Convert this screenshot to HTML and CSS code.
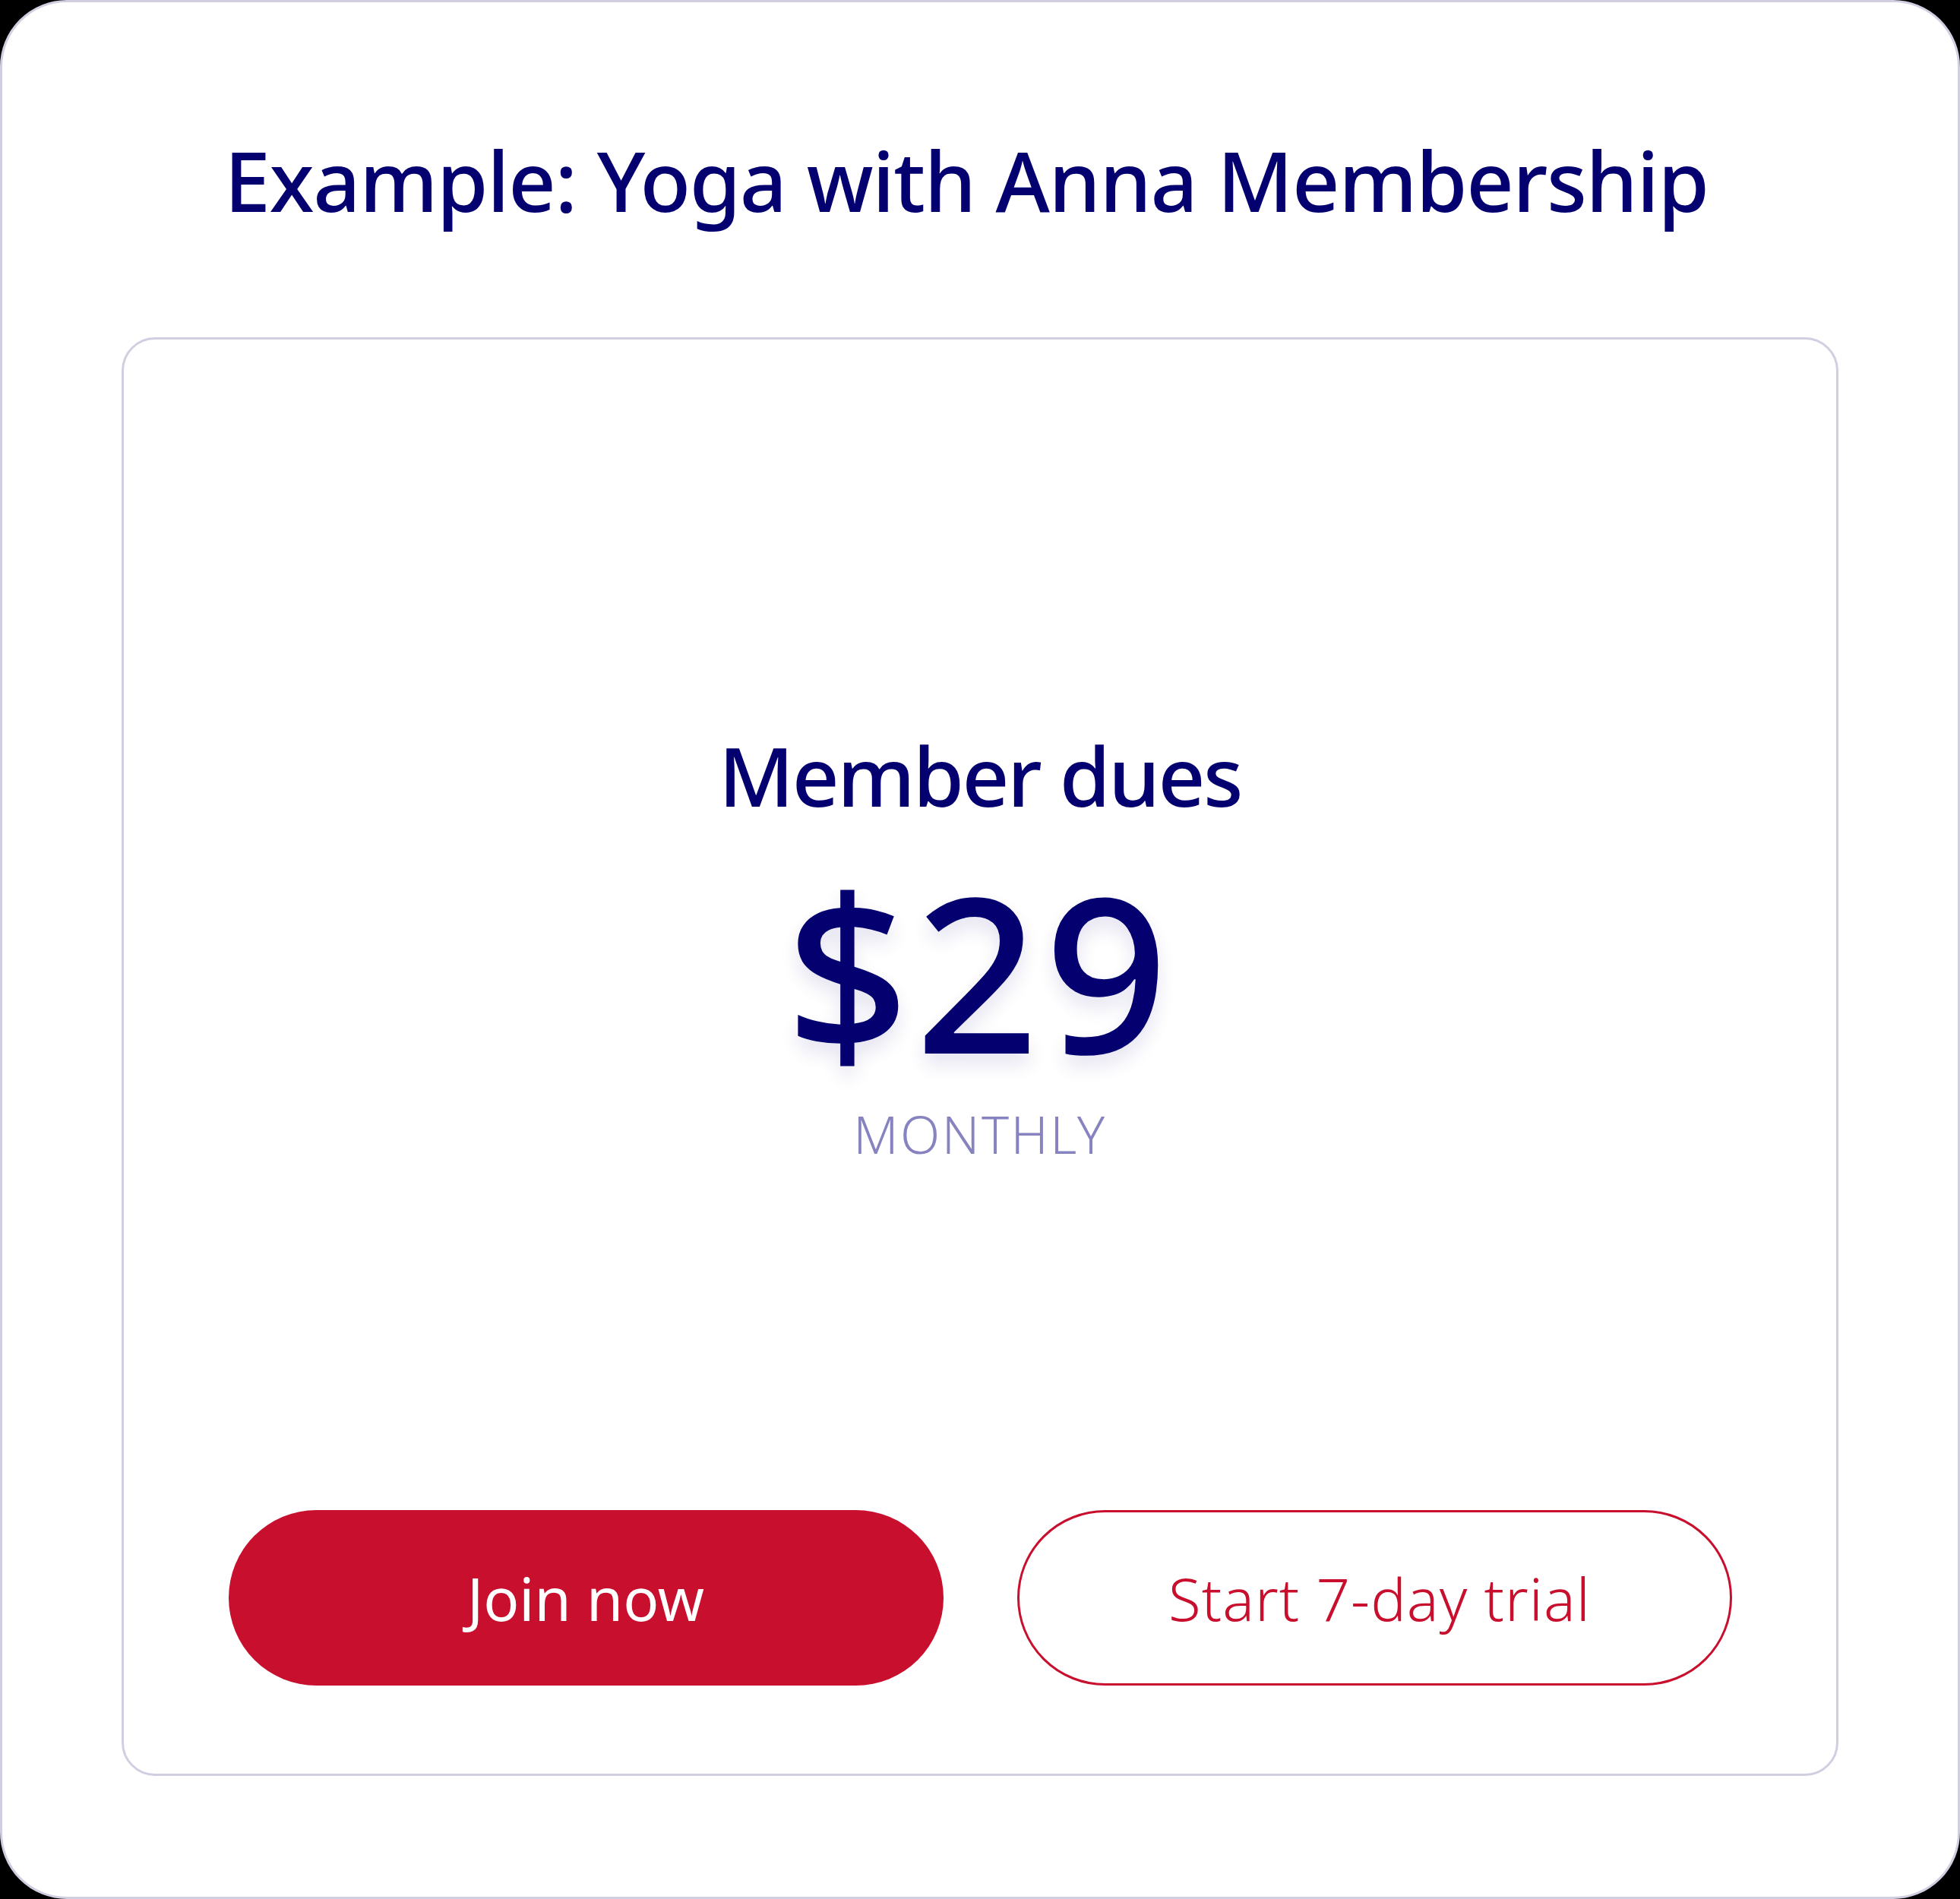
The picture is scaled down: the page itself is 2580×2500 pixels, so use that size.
FILE: index.html
```html
<!DOCTYPE html>
<html lang="en">
<head>
<meta charset="utf-8">
<title>Yoga with Anna Membership</title>
<link rel="stylesheet" href="styles.css">
</head>
<body>
<main class="card">
  <h1 class="title">Example: Yoga with Anna Membership</h1>
  <section class="plan">
    <div class="plan-body">
      <h2 class="plan-name">Member dues</h2>
      <div class="price">$29</div>
      <div class="period">MONTHLY</div>
    </div>
    <div class="actions">
      <a class="btn btn-primary" href="#">Join now</a>
      <a class="btn btn-outline" href="#">Start 7-day trial</a>
    </div>
  </section>
</main>
</body>
</html>
```
FILE: styles.css
```css
html, body {
  margin: 0;
  padding: 0;
  background: #000;
}
body {
  width: 2580px;
  height: 2500px;
  font-family: "Noto Sans", "Open Sans", sans-serif;
  color: #040070;
}
.card {
  box-sizing: border-box;
  width: 2580px;
  height: 2500px;
  background: #fff;
  border: 3px solid #d0cfe2;
  border-radius: 88px;
  padding: 179px 157px 159px;
  display: flex;
  flex-direction: column;
}
.title {
  margin: 0 0 153px;
  padding-right: 36px;
  font-size: 109px;
  line-height: 109px;
  font-weight: 500;
  text-align: center;
  letter-spacing: -1.4px;
}
.plan {
  flex: 1;
  border: 3px solid #d0cfe2;
  border-radius: 44px;
  display: flex;
  flex-direction: column;
  padding: 0 0 116px;
}
.plan-body {
  padding-top: 520px;
  display: flex;
  flex-direction: column;
  align-items: center;
}
.plan-name {
  margin: 0;
  font-size: 108px;
  line-height: 108px;
  font-weight: 500;
  letter-spacing: -2.5px;
}
.price {
  margin-top: 60px;
  font-size: 284px;
  line-height: 284px;
  font-weight: 500;
  letter-spacing: 8px;
  text-shadow: 0 14px 24px rgba(40, 30, 140, 0.12);
}
.period {
  margin-top: 40px;
  font-size: 68px;
  line-height: 68px;
  font-weight: 300;
  letter-spacing: 2.5px;
  color: #8783c0;
}
.actions {
  margin-top: auto;
  display: flex;
  justify-content: center;
  gap: 97px;
}
.btn {
  box-sizing: border-box;
  width: 941px;
  height: 231px;
  border-radius: 116px;
  display: flex;
  align-items: center;
  justify-content: center;
  font-size: 78px;
  text-decoration: none;
  color: #c8102e;
}
.btn-primary {
  background: #c8102e;
  color: #fff;
  font-weight: 400;
}
.btn-outline {
  border: 3px solid #c8102e;
  font-weight: 300;
  letter-spacing: 1px;
  padding-left: 14px;
}
```
